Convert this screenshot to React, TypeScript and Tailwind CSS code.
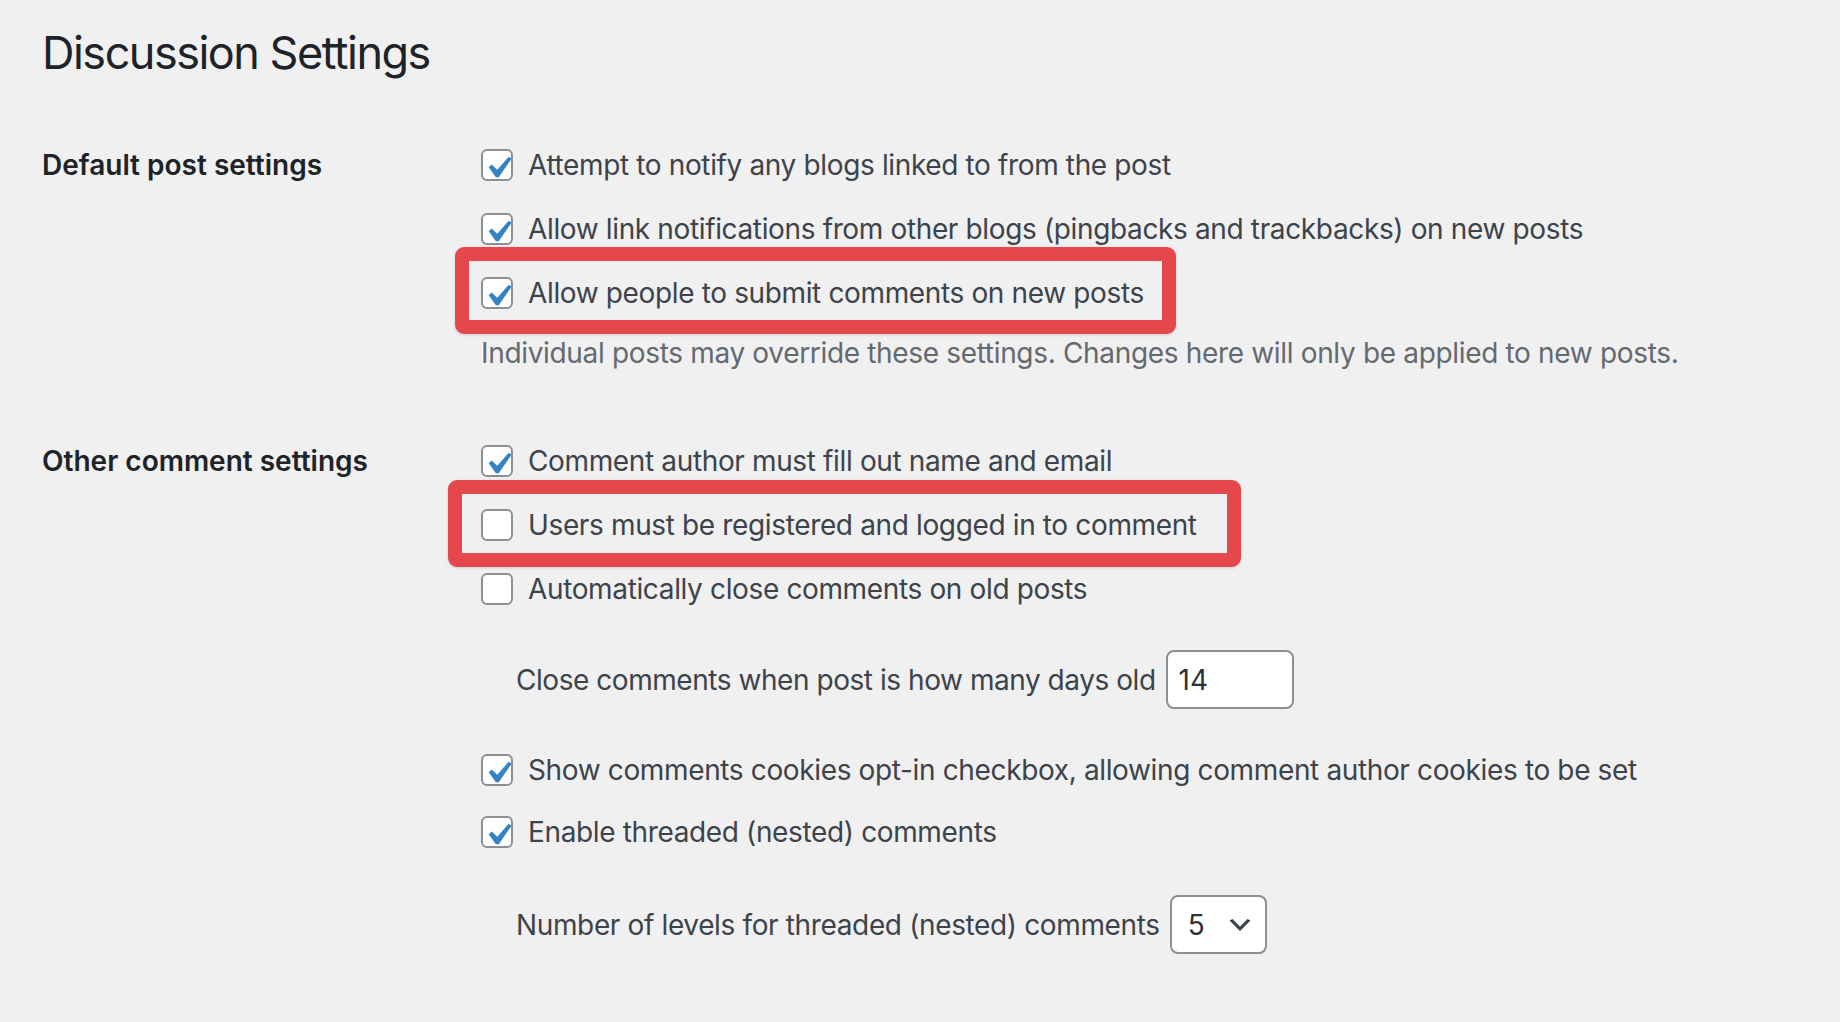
import React from 'react';

const FONT = { fontFamily: 'Inter, "Noto Sans", "Liberation Sans", sans-serif' };

const Checkbox = ({ checked }: { checked?: boolean }) => (
  <span className="relative inline-block h-[32px] w-[32px] shrink-0 rounded-[6px] border-2 border-[#8c8f94] bg-white">
    {checked && (
      <svg viewBox="0 0 20 20" className="absolute left-[-7px] top-[-5px] h-[44px] w-[44px]">
        <path d="M14.83 4.89l1.34.94-5.81 8.38H9.02L5.78 9.67l1.34-1.25 2.57 2.4z" fill="#3582c4" />
      </svg>
    )}
  </span>
);

const Row = ({ checked, label, className = '' }: { checked?: boolean; label: string; className?: string }) => (
  <div className={`flex h-[64px] items-center gap-[15px] ${className}`}>
    <Checkbox checked={checked} />
    <span className="whitespace-nowrap text-[28px] tracking-[-0.36px] text-[#3c434a]">{label}</span>
  </div>
);

// red annotation frame drawn over a row
const Highlight = ({ className }: { className: string }) => (
  <span className={`pointer-events-none absolute rounded-[9px] border-[14px] border-[#e4474c] shadow-[0_1px_3px_rgba(0,0,0,0.15)] ${className}`} />
);

export default function App() {
  return (
    <div className="min-h-[1022px] bg-[#f0f0f1] pl-[42px] pt-[25px]" style={FONT}>
      <h1 className="h-[56px] text-[45px] leading-[56px] font-normal tracking-[-1.5px] text-[#1d2327]">Discussion Settings</h1>

      {/* Default post settings */}
      <div className="mt-[52px] flex">
        <div className="w-[439px] shrink-0">
          <div className="flex h-[64px] items-center text-[28px] font-semibold text-[#1d2327]">Default post settings</div>
        </div>
        <div className="flex flex-col">
          <Row checked label="Attempt to notify any blogs linked to from the post" />
          <Row checked label="Allow link notifications from other blogs (pingbacks and trackbacks) on new posts" />
          <div className="relative">
            <Highlight className="left-[-26px] top-[-14px] h-[87px] w-[721px]" />
            <Row checked label="Allow people to submit comments on new posts" />
          </div>
          <p className="mt-[8px] h-[40px] whitespace-nowrap text-[28px] leading-[40px] tracking-[-0.33px] text-[#646970]">
            Individual posts may override these settings. Changes here will only be applied to new posts.
          </p>
        </div>
      </div>

      {/* Other comment settings */}
      <div className="mt-[56px] flex">
        <div className="w-[439px] shrink-0">
          <div className="flex h-[64px] items-center text-[28px] font-semibold text-[#1d2327]">Other comment settings</div>
        </div>
        <div className="flex flex-col">
          <Row checked label="Comment author must fill out name and email" />
          <div className="relative">
            <Highlight className="left-[-33px] top-[-13px] h-[87px] w-[793px]" />
            <Row label="Users must be registered and logged in to comment" />
          </div>
          <Row label="Automatically close comments on old posts" />

          <div className="ml-[35px] mt-[29px] flex h-[59px] items-center gap-[10px]">
            <span className="whitespace-nowrap text-[28px] tracking-[-0.45px] text-[#3c434a]">Close comments when post is how many days old</span>
            <div className="flex h-[59px] w-[128px] items-center rounded-[8px] border-2 border-[#8c8f94] bg-white px-[11px] text-[28px] text-[#2c3338]">
              14
            </div>
          </div>

          <Row checked label="Show comments cookies opt-in checkbox, allowing comment author cookies to be set" className="mt-[30px] !h-[62px]" />
          <Row checked label="Enable threaded (nested) comments" className="!h-[62px]" />

          <div className="ml-[35px] mt-[32px] flex h-[59px] items-center gap-[10px]">
            <span className="whitespace-nowrap text-[28px] tracking-[-0.36px] text-[#3c434a]">Number of levels for threaded (nested) comments</span>
            <div className="flex h-[59px] w-[97px] items-center justify-between rounded-[8px] border-2 border-[#8c8f94] bg-white pl-[16px] pr-[10px] text-[28px] text-[#2c3338]">
              <span>5</span>
              <svg viewBox="0 0 20 20" className="h-[30px] w-[30px]">
                <path d="M5 6l5 5 5-5 2 1-7 7-7-7 2-1z" fill="#3c434a" />
              </svg>
            </div>
          </div>
        </div>
      </div>
    </div>
  );
}
